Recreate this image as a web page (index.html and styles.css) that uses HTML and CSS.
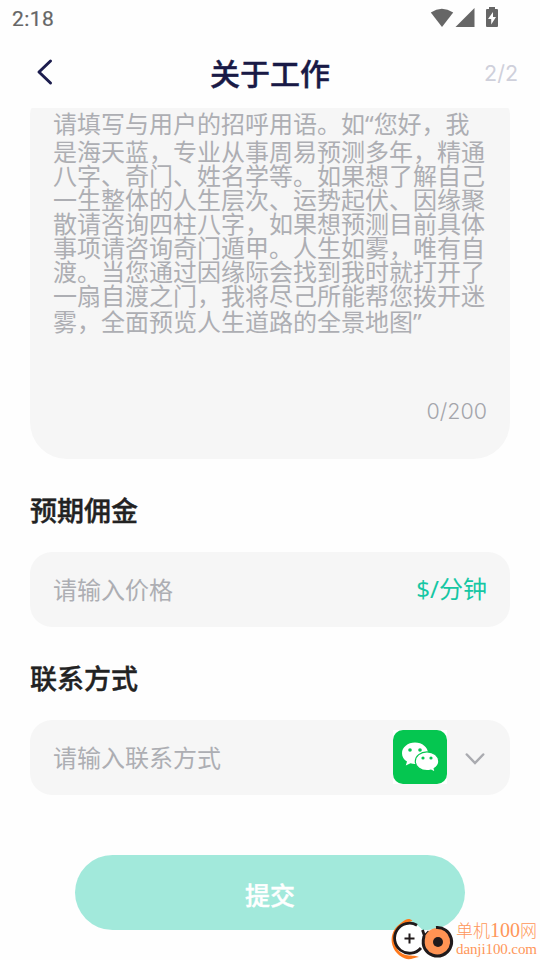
FILE: index.html
```html
<!DOCTYPE html>
<html lang="zh-CN">
<head>
<meta charset="utf-8">
<title>关于工作</title>
<link rel="stylesheet" href="styles.css">
</head>
<body>
<div class="screen">
  <div class="status">
    <span class="clock">2:18</span>
    <svg class="status-icons" width="70" height="24" viewBox="0 0 70 24" fill="#666">
      <path d="M0.8 5.4Q11.8-1.8 23.2 5.4L12 20Z" transform="translate(0 1)"/>
      <path d="M25.5 21H44.5V2Z"/>
      <path fill-rule="evenodd" d="M59 1H65V3H67Q68 3 68 4V20Q68 21 67 21H57Q56 21 56 20V4Q56 3 57 3H59ZM63 6L58 13H61.2V18.5L66 11H63Z"/>
    </svg>
  </div>
  <header class="header">
    <svg class="back" width="18" height="28" viewBox="0 0 18 28"><path d="M14.5 3L3 14L14.5 25" fill="none" stroke="#1c1d4e" stroke-width="3" stroke-linecap="round" stroke-linejoin="round"/></svg>
    <h1 class="title">关于工作</h1>
    <span class="step">2/2</span>
  </header>
  <main class="content">
    <section class="greeting">
      <div class="line first">请填写与用户的招呼用语。如<span class="quote">“</span>您好，我</div>
      <div class="line">是海天蓝，专业从事周易预测多年，精通</div>
      <div class="line">八字、奇门、姓名学等。如果想了解自己</div>
      <div class="line">一生整体的人生层次、运势起伏、因缘聚</div>
      <div class="line">散请咨询四柱八字，如果想预测目前具体</div>
      <div class="line">事项请咨询奇门遁甲。人生如雾，唯有自</div>
      <div class="line">渡。当您通过因缘际会找到我时就打开了</div>
      <div class="line">一扇自渡之门，我将尽己所能帮您拨开迷</div>
      <div class="line last">雾，全面预览人生道路的全景地图<span class="quote">”</span></div>
      <div class="count">0/200</div>
    </section>
    <h2 class="label">预期佣金</h2>
    <div class="field"><span class="hint">请输入价格</span><span class="unit"><span class="slash">$/</span>分钟</span></div>
    <h2 class="label">联系方式</h2>
    <div class="field">
      <span class="hint">请输入联系方式</span>
      <span class="app-tile">
        <svg class="wechat" width="54" height="54" viewBox="0 0 54 54">
          <rect width="54" height="54" rx="10" fill="#05c650"/>
          <path d="M22 12.5C14.8 12.5 9 17.3 9 23.2C9 26.6 10.8 29.5 14 31.5L12.8 35.5L17.5 33.2Q19.7 33.9 22 33.9C29.2 33.9 35 29.1 35 23.2S29.2 12.5 22 12.5Z" fill="#fff"/>
          <path d="M34 21.8C27.5 21.8 22.3 26.1 22.3 31.3S27.5 40.7 34 40.7Q36.2 40.7 38 40.1L42.2 42.3L41.2 38.5C44.2 36.7 45.8 34.2 45.8 31.3C45.8 26.1 40.5 21.8 34 21.8Z" fill="#fff" stroke="#05c650" stroke-width="1.2"/>
          <g fill="#05c650"><circle cx="17" cy="20" r="1.8"/><circle cx="27" cy="20" r="1.8"/><circle cx="30" cy="28" r="1.6"/><circle cx="38" cy="28" r="1.6"/></g>
        </svg>
      </span>
      <svg class="chevron" width="20" height="14" viewBox="0 0 20 14"><path d="M1.8 2.5L10 11L18.2 2.5" fill="none" stroke="#aaabb0" stroke-width="2.5" stroke-linecap="round"/></svg>
    </div>
    <button class="submit">提交</button>
  </main>
  <div class="watermark">
    <svg class="mark" width="66" height="44" viewBox="0 0 66 44" fill="none">
      <path d="M15 41.5C4 37 -0.5 26 2.5 17C5 10 9 7.5 13 4.5C16 1.5 20 1 22.5 4C17 5 13 7 10 10C5 15 3.5 22 5.5 28C7.5 34 11 36.5 16 38C20 39 25 38 29 40C24 40.5 20 43.5 15 41.5Z" fill="#ff791c"/>
      <circle cx="20" cy="21.5" r="15" fill="#fff"/>
      <path d="M27 8.2A15 15 0 1 0 31 31" stroke="#211a1b" stroke-width="2.8"/>
      <path d="M14.5 21.5H24.5M19.5 16.5V26.5" stroke="#211a1b" stroke-width="2"/>
      <path d="M32.5 13L34.5 19L39 14.5" stroke="#211a1b" stroke-width="2.8"/>
      <circle cx="47.5" cy="24.5" r="13.5" fill="#ff9353"/>
      <path d="M46 10.5A14.3 14.3 0 1 1 35 32Q32 27 34 19" stroke="#211a1b" stroke-width="3"/>
      <circle cx="48" cy="25" r="5" fill="#211a1b"/>
    </svg>
    <div class="mark-text"><div class="mark-name">单机<span class="mark-num">100</span>网</div><div class="mark-site">danji100.com</div></div>
  </div>
</div>
</body>
</html>
```
FILE: styles.css
```css
* { box-sizing: border-box; }
body { margin: 0; background: #fefefe; font-family: "Noto Sans CJK SC", sans-serif; }
.screen { position: relative; width: 540px; height: 960px; overflow: hidden; display: flex; flex-direction: column; }
.status { height: 36px; display: flex; justify-content: space-between; padding: 6px 40px 0 12px; }
.clock { font: 400 21px/26px Roboto, sans-serif; color: #666; letter-spacing: .4px; -webkit-text-stroke: .2px #666; }
.status-icons { display: block; }
.header { height: 72px; display: grid; grid-template-columns: 100px 1fr 100px; align-items: center; padding: 0 22px 0 36px; }
.back { display: block; }
.title { margin: 0; padding-right: 14px; font-size: 30px; line-height: 40px; font-weight: 500; -webkit-text-stroke: .4px #191a46; color: #191a46; text-align: center; }
.step { padding-top: 2px; text-align: right; font: 400 21.5px/28px Inter, sans-serif; color: #cfd0db; }
.content { padding: 0 30px; display: flex; flex-direction: column; }
.greeting { height: 351px; padding: 3px 23px 0; border-radius: 2px 2px 37px 37px / 8px 8px 37px 37px; background: #f6f6f6; color: #adaeb3; font-size: 24px; }
.line { height: 24px; line-height: 24px; white-space: nowrap; }
.first { height: 28px; }
.last { padding-top: 2px; height: 26px; }
.quote { font-family: "Noto Sans", sans-serif; line-height: 1; }
.count { margin-top: 64px; text-align: right; font: 300 21.5px/28px Inter, sans-serif; color: #a4a5ab; }
.label { margin: 31px 0 22px; font-size: 27px; line-height: 40px; font-weight: 500; -webkit-text-stroke: .4px #222; color: #222; }
.field { height: 75px; padding: 0 23px 2px; border-radius: 22px; background: #f6f6f6; display: flex; align-items: center; }
.hint { flex: 1; padding-bottom: 1px; font-size: 24px; color: #adaeb3; }
.unit { padding-bottom: 2px; font-size: 24px; color: #16c7a4; }
.slash { font: 400 24px/1 "Noto Sans", sans-serif; }
.app-tile { width: 54px; height: 54px; background: #fff; }
.wechat { display: block; }
.chevron { margin: 5px 2px 0 18px; }
.submit { width: 390px; height: 75px; margin: 60px auto 0; padding: 3px 0 0; border: 0; border-radius: 38px; background: #a2e9db; color: #fff; font: 500 25px "Noto Sans CJK SC", sans-serif; -webkit-text-stroke: .4px #fff; }
.watermark { position: absolute; left: 390px; top: 917px; display: flex; color: #ff9659; }
.mark { display: block; }
.mark-text { width: 84px; white-space: nowrap; }
.mark-name { font-size: 17px; font-weight: 300; line-height: 26px; }
.mark-num { font-family: "Liberation Serif", serif; font-size: 20px; }
.mark-site { font: 15px/12px "Liberation Serif", serif; letter-spacing: -.1px; }
```
